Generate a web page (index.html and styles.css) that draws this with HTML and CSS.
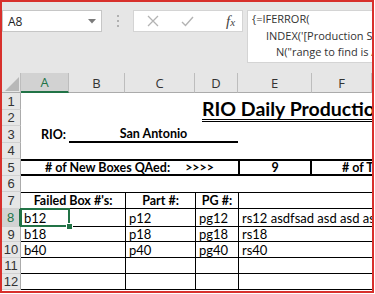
FILE: index.html
```html
<!DOCTYPE html>
<html lang="en">
<head>
    <meta charset="UTF-8">
    <meta name="viewport" content="width=device-width, initial-scale=1.0">
    <title>RIO Daily Production</title>
    <link rel="stylesheet" href="styles.css">
</head>
<body>
    <div class="window">
        <div class="toolbar">
            <div class="namebox">
                <span>A8</span>
                <svg class="drop" width="8" height="5" viewBox="0 0 8 5"><path d="M0 0H8L4 4.5Z" fill="#7a7a7a"/></svg>
            </div>
            <div class="grip">
                <svg width="2" height="12" viewBox="0 0 2 12"><rect y="0" width="2" height="2" fill="#b0b0b0"/><rect y="5" width="2" height="2" fill="#b0b0b0"/><rect y="10" width="2" height="2" fill="#b0b0b0"/></svg>
            </div>
            <div class="fx-buttons">
                <svg class="btn-icon" width="12" height="12" viewBox="0 0 12 12"><path d="M1 1L11 11M11 1L1 11" stroke="#b3b3b3" stroke-width="1.3" fill="none"/></svg>
                <svg class="btn-icon" width="13" height="11" viewBox="0 0 13 11"><path d="M1 6L4.5 9.5L12 1" stroke="#b3b3b3" stroke-width="1.4" fill="none"/></svg>
                <span class="fx">f<span class="fx-x">x</span></span>
            </div>
            <div class="formula">
                <div>{=IFERROR(</div>
                <div class="indent-1">INDEX('[Production Schedule.xlsx]Sheet1'!$A:$Z,</div>
                <div class="indent-2">N("range to find is A:Z")</div>
            </div>
        </div>

        <div class="sheet">
            <div class="corner"><svg width="14" height="14" viewBox="0 0 14 14"><path d="M14 0V14H0Z" fill="#b8b8b8"/></svg></div>
            <div class="col-head selected">A</div>
            <div class="col-head">B</div>
            <div class="col-head">C</div>
            <div class="col-head">D</div>
            <div class="col-head">E</div>
            <div class="col-head">F</div>

            <!-- row 1 / 2 -->
            <div class="row-head">1</div>
            <div class="cell span-3"></div>
            <div class="cell title-cell"><span class="title">RIO Daily Production Report</span></div>
            <div class="row-head">2</div>
            <div class="cell span-3"></div>

            <!-- row 3 -->
            <div class="row-head">3</div>
            <div class="cell bold right">RIO:</div>
            <div class="cell span-3 bold center thick-bottom">San Antonio</div>
            <div class="cell span-2"></div>

            <!-- row 4 -->
            <div class="row-head">4</div>
            <div class="cell span-6"></div>

            <!-- row 5 -->
            <div class="row-head">5</div>
            <div class="cell span-4 bold center thick-row">
                # of New Boxes QAed:<span class="arrows">&gt;&gt;&gt;&gt;</span>
            </div>
            <div class="cell bold center thick-row thick-sides">9</div>
            <div class="cell bold thick-row clip"><span class="far-label"># of Three Month Boxes QAed:</span></div>

            <!-- row 6 -->
            <div class="row-head">6</div>
            <div class="cell span-6"></div>

            <!-- row 7 -->
            <div class="row-head">7</div>
            <div class="cell span-2 bold center grid top">Failed Box #'s:</div>
            <div class="cell bold center grid top line-left">Part #:</div>
            <div class="cell bold center grid top line-left">PG #:</div>
            <div class="cell span-2 grid top line-left"></div>

            <!-- row 8 -->
            <div class="row-head selected">8</div>
            <div class="cell grid active">b12</div>
            <div class="cell grid"></div>
            <div class="cell grid line-left">p12</div>
            <div class="cell grid line-left">pg12</div>
            <div class="cell span-2 grid line-left clip">rs12 asdfsad asd asd asd</div>

            <!-- row 9 -->
            <div class="row-head">9</div>
            <div class="cell grid">b18</div>
            <div class="cell grid"></div>
            <div class="cell grid line-left">p18</div>
            <div class="cell grid line-left">pg18</div>
            <div class="cell span-2 grid line-left">rs18</div>

            <!-- row 10 -->
            <div class="row-head">10</div>
            <div class="cell grid">b40</div>
            <div class="cell grid"></div>
            <div class="cell grid line-left">p40</div>
            <div class="cell grid line-left">pg40</div>
            <div class="cell span-2 grid line-left">rs40</div>

            <!-- row 11 -->
            <div class="row-head">11</div>
            <div class="cell span-2 grid"></div>
            <div class="cell grid line-left"></div>
            <div class="cell grid line-left"></div>
            <div class="cell span-2 grid line-left"></div>

            <!-- row 12 -->
            <div class="row-head">12</div>
            <div class="cell span-2 grid"></div>
            <div class="cell grid line-left"></div>
            <div class="cell grid line-left"></div>
            <div class="cell span-2 grid line-left"></div>
        </div>
    </div>
</body>
</html>
```

FILE: styles.css
```css
body {
    margin: 0;
    padding: 0;
    background-color: #fff;
    font-family: Lato, "Liberation Sans", sans-serif;
}

.window {
    width: 374px;
    height: 293px;
    box-sizing: border-box;
    border: 2px solid #d8302c;
    overflow: hidden;
    background-color: #fff;
}

/* formula bar */

.toolbar {
    height: 71px;
    padding-top: 8px;
    box-sizing: border-box;
    background-color: #e6e6e6;
    display: flex;
    align-items: flex-start;
}

.namebox {
    width: 100px;
    height: 22px;
    box-sizing: border-box;
    background-color: #fff;
    border: 1px solid #c6c6c6;
    display: flex;
    align-items: center;
    justify-content: space-between;
    padding: 0 5px 0 5px;
    font-family: "Open Sans", sans-serif;
    font-size: 12px;
    color: #222;
}

.grip {
    width: 31px;
    height: 22px;
    display: flex;
    align-items: center;
    justify-content: center;
}

.fx-buttons {
    width: 110px;
    height: 22px;
    box-sizing: border-box;
    background-color: #fff;
    border: 1px solid #d4d4d4;
    display: flex;
    align-items: center;
    padding-left: 13px;
    gap: 22px;
}

.fx {
    margin-left: 10px;
    font-family: "Liberation Serif", serif;
    font-style: italic;
    font-size: 15px;
    color: #444;
}

.fx-x {
    font-size: 11px;
}

.formula {
    flex: 1;
    height: 53px;
    margin-left: 4px;
    box-sizing: border-box;
    background-color: #fff;
    border: 1px solid #d4d4d4;
    border-right: none;
    padding: 0 0 0 4px;
    font-family: "Open Sans", sans-serif;
    font-size: 11px;
    line-height: 16.5px;
    color: #333;
    white-space: nowrap;
    overflow: hidden;
}

.indent-1 {
    padding-left: 14px;
}

.indent-2 {
    padding-left: 24px;
}

/* sheet */

.sheet {
    display: grid;
    grid-template-columns: 19px 48px 56px 70px 43px 74px 60px;
    grid-template-rows: 20px 17px 16px 17px 16px 17px 16px 17px 18px 15px 16px 16px 16px;
}

.corner {
    background-color: #e6e6e6;
    border-right: 1px solid #bdbdbd;
    border-bottom: 1px solid #ababab;
    display: flex;
    align-items: flex-end;
    justify-content: flex-end;
    padding: 0 1px 1px 0;
}

.col-head {
    background-color: #e6e6e6;
    border-right: 1px solid #bdbdbd;
    border-bottom: 1px solid #ababab;
    font-family: "Open Sans", sans-serif;
    font-size: 13px;
    color: #333;
    display: flex;
    align-items: center;
    justify-content: center;
}

.col-head.selected {
    background-color: #d2d2d2;
    color: #217346;
    border-bottom: 2px solid #217346;
}

.row-head {
    grid-column: 1;
    background-color: #e6e6e6;
    border-right: 1px solid #ababab;
    border-bottom: 1px solid #d0d0d0;
    font-family: "Liberation Sans", sans-serif;
    font-size: 13px;
    color: #333;
    display: flex;
    align-items: center;
    justify-content: center;
    overflow: hidden;
}

.row-head.selected {
    background-color: #d2d2d2;
    color: #217346;
    border-right: 2px solid #217346;
}

.cell {
    box-sizing: border-box;
    font-size: 13px;
    color: #000;
    padding: 0 3px;
    white-space: nowrap;
    display: flex;
    align-items: center;
    position: relative;
}

.span-2 { grid-column: span 2; }
.span-3 { grid-column: span 3; }
.span-4 { grid-column: span 4; }
.span-6 { grid-column: span 6; }

.bold {
    font-weight: bold;
    font-size: 12.5px;
}

.center { justify-content: center; }
.right { justify-content: flex-end; }
.clip { overflow: hidden; }

.title-cell {
    grid-column: 5 / span 3;
    grid-row: span 2;
    align-items: flex-end;
    padding-left: 7px;
    padding-bottom: 4px;
    overflow: hidden;
}

.title {
    font-size: 19.5px;
    font-weight: bold;
    line-height: 20px;
    border-bottom: 3px double #000;
}

.thick-bottom {
    border-bottom: 2px solid #000;
}

.thick-row {
    border-top: 2px solid #000;
    border-bottom: 2px solid #000;
}

.thick-sides {
    border-left: 2px solid #000;
    border-right: 2px solid #000;
}

.arrows {
    margin-left: 15px;
}

.far-label {
    padding-left: 27px;
}

.grid {
    border-bottom: 1px solid #000;
}

.grid.top {
    border-top: 1px solid #000;
}

.line-left {
    border-left: 1px solid #000;
}

.active::after {
    content: "";
    position: absolute;
    left: -1px;
    top: -1px;
    right: -1px;
    bottom: -1px;
    border: 2px solid #217346;
}

.active::before {
    content: "";
    position: absolute;
    right: -4px;
    bottom: -4px;
    width: 5px;
    height: 5px;
    background-color: #217346;
    border: 1px solid #fff;
    z-index: 1;
}
```
